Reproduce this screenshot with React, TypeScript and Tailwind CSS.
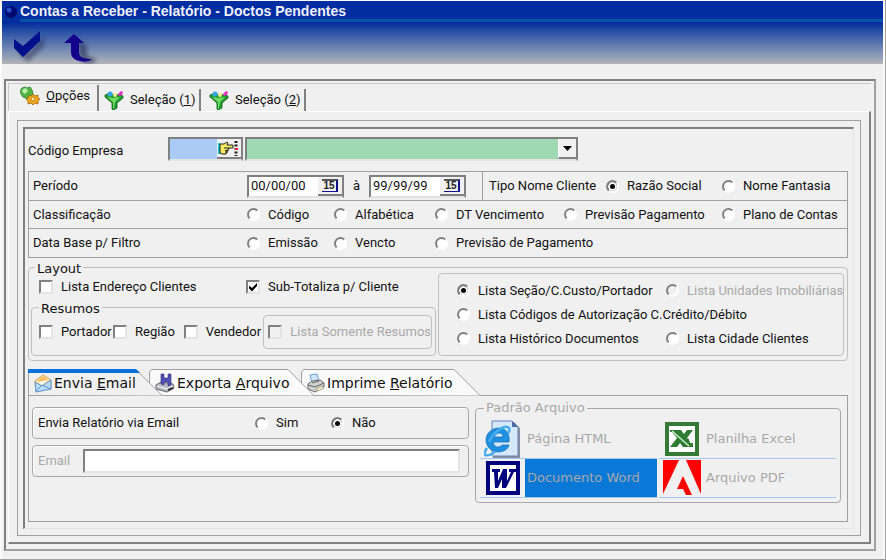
import React, { useState } from 'react';

const radioClass =
  'appearance-none m-0 w-[13px] h-[13px] shrink-0 rounded-full border-2 border-[#808080] border-r-white border-b-white bg-white checked:bg-black checked:shadow-[inset_0_0_0_2px_white] disabled:bg-[#f0f0f0]';

const groupClass = 'min-w-0 rounded border border-[#a8a8a8] shadow-[inset_1px_1px_0_white]';

interface OptionProps {
  name: string;
  label: string;
  defaultChecked?: boolean;
  disabled?: boolean;
  className?: string;
}

const Radio: React.FC<OptionProps> = ({ name, label, defaultChecked, disabled, className = '' }) => (
  <label className={`flex items-center gap-2 whitespace-nowrap ${disabled ? 'text-[#a8a8a8]' : ''} ${className}`}>
    <input type="radio" name={name} defaultChecked={defaultChecked} disabled={disabled} className={radioClass} />
    {label}
  </label>
);

const Check: React.FC<OptionProps> = ({ name, label, defaultChecked, disabled, className = '' }) => (
  <label className={`flex items-center gap-2 whitespace-nowrap ${disabled ? 'text-[#a8a8a8]' : ''} ${className}`}>
    <span className="grid shrink-0">
      <input
        type="checkbox"
        name={name}
        defaultChecked={defaultChecked}
        disabled={disabled}
        className="peer appearance-none m-0 w-[14px] h-[14px] col-start-1 row-start-1 border-2 border-[#808080] border-r-[#e3e3e3] border-b-[#e3e3e3] bg-white disabled:bg-[#f0f0f0]"
      />
      <svg viewBox="0 0 14 14" className="w-[14px] h-[14px] col-start-1 row-start-1 pointer-events-none invisible peer-checked:visible">
        <path d="M3 5.500v3l3 3 5-5.500V3L6 8z" fill="#000" />
      </svg>
    </span>
    {label}
  </label>
);

const DateField: React.FC<{ label: string; value: string }> = ({ label, value }) => (
  <div className="flex w-[97px] h-[23px] border-2 border-[#808080] border-b-[#e3e3e3] bg-white">
    <input aria-label={label} defaultValue={value} className="min-w-0 flex-1 pl-0.5 bg-white outline-none" />
    <button
      type="button"
      aria-label={`Calendário ${label}`}
      className="w-6 flex items-center justify-center bg-[#f0f0f0] border-b-2 border-[#808080]"
    >
      <span className="w-4 h-[13px] border-t-2 border-r-2 border-b border-t-[#555] border-r-[#10108c] border-b-[#10108c] text-[10px] leading-[10px] font-bold text-[#222] font-['Liberation_Sans',sans-serif]">
        15
      </span>
    </button>
  </div>
);

const GearsIcon = () => (
  <svg viewBox="0 0 20 20" className="w-5 h-5">
    <path d="M2 2l3-1 2 1 3-1 2 3 1 3-1 4-4 2-5-2-2-3-1-3z" fill="#4db441" stroke="#2c7d28" strokeWidth=".8" />
    <path d="M3 3l3-1 2 3-3 3-3-2z" fill="#b7efa9" />
    <path d="M9 9l2 1 2-2 2 2 3-1v3l2 1-2 2v3l-3-1-2 2-2-2-3 1v-3l-2-2 2-1z" fill="#f2a81d" stroke="#9c6512" strokeWidth=".8" />
    <circle cx="13" cy="13" r="2" fill="#fbe3a0" stroke="#b5720e" strokeWidth=".8" />
  </svg>
);

const FunnelIcon = () => (
  <svg viewBox="0 0 20 20" className="w-5 h-5">
    <path d="M1 5l3-1 12 1 3 1v2l-6 5v5l-4 2-1-1v-6L1 7z" fill="#1e9e2d" stroke="#0b5a17" strokeWidth=".8" />
    <path d="M3 7l6 1 7-1-5 5-1 6-1 1v-7z" fill="#74dc64" />
    <circle cx="6" cy="4" r="2.600" fill="#35a7e0" />
    <circle cx="11" cy="5" r="2" fill="#f3f08a" />
    <path d="M14 4l3-3 2 1-1 3-3 1z" fill="#e431c3" />
  </svg>
);

const HandIcon = () => (
  <svg viewBox="0 0 22 17" className="w-[22px] h-[17px]">
    <path d="M2 3v11" stroke="#10c4d0" strokeWidth="2" />
    <path
      d="M3 4h4l3-2 1 1-1 2h6v3h-4v1h-1v2h-1v2h-1v1H5l-2-1z"
      fill="#f5ea62"
      stroke="#222"
      strokeWidth="1"
    />
    <path d="M7 8h5M8 10.500h3M8 12h2" stroke="#222" />
    <path d="M19 1v15" stroke="#222" strokeWidth="3" strokeDasharray="2 1.500" />
    <path d="M18 8h3v2h-3z" fill="#f22" />
  </svg>
);

const MailIcon = () => (
  <svg viewBox="0 0 18 20" className="w-[18px] h-5">
    <path d="M1 8l8-6 8 5v9L2 18z" fill="#ffe3a1" stroke="#d3a457" />
    <path d="M1 9l7 4 9-6v9L2 19z" fill="#b8dcfa" stroke="#5d92cb" />
    <path d="M2 18l6-6 9 4" fill="none" stroke="#5d92cb" />
    <path d="M4 8l5-5 5 4-6 5z" fill="#f9bd63" />
    <path d="M4 9l10-2-6 5z" fill="#fff" />
  </svg>
);

const ExportIcon = () => (
  <svg viewBox="0 0 20 20" className="w-5 h-5">
    <path d="M1 12l5-3 12 2 1 4-7 4-11-3z" fill="#b9b9c1" stroke="#66666e" />
    <path d="M2 13l10 3 6-3" fill="none" stroke="#fff" />
    <path d="M13 17l5-2" stroke="#333" strokeWidth="2" />
    <path d="M6 1h3v4h4V1h3v11l-3 1V9H9v3l-3-1z" fill="#4f4fb4" stroke="#30307c" strokeWidth=".6" />
  </svg>
);

const PrinterIcon = () => (
  <svg viewBox="0 0 18 20" className="w-[18px] h-5">
    <path d="M3 2l7-1 2 8-7 1z" fill="#cfe6ff" stroke="#6fa0d6" />
    <path d="M1 11l4-3 8-1 4 3v4l-9 5-7-3z" fill="#d0d0d0" stroke="#666" />
    <path d="M1 12l7 2 9-4M5 10l7-2" fill="none" stroke="#666" />
    <path d="M9 16l6-3 2 2-6 3z" fill="#f8efb6" stroke="#777" strokeWidth=".6" />
  </svg>
);

const HtmlIcon = () => (
  <svg viewBox="0 0 38 38" className="w-[38px] h-[38px]">
    <path d="M9 2h21l6 6v30H9z" fill="#8a8f9a" />
    <path d="M8 1h20l6 6v29H8z" fill="#d5e8fb" stroke="#6484b8" />
    <path d="M28 1v6h6z" fill="#4b6ea8" />
    <path
      d="M15 8C8 8 2 13 2 20s6 12 12 12 10-3 11-7h-7c-1 1-2 2-4 2-3 0-4-2-5-5h16c1-8-3-14-10-14zm-5 9c1-2 3-4 5-4s4 1 4 4z"
      fill="#1f8fe0"
      stroke="#1268b4"
      strokeWidth=".7"
    />
    <path d="M3 28C-3 37 3 37 11 32M5 22C9 12 21 4 25 8c1 2 0 4-1 5" fill="none" stroke="#43adf0" strokeWidth="2.500" />
  </svg>
);

const ExcelIcon = () => (
  <svg viewBox="0 0 34 34" className="w-[34px] h-[34px]">
    <path d="M2 2h30v30H2z" fill="#fff" stroke="#347a36" strokeWidth="4" />
    <path d="M5 8h11l3 4 3-4h6l-6 8 3 2v3h3v4H18l-3-4-3 4H5l7-9-5-6H5z" fill="#2e7d32" />
    <path d="M7 9l17 15" stroke="#cdeeca" strokeWidth="1.500" />
    <path d="M24 17h5v4h-4z" fill="#fff" />
  </svg>
);

const WordIcon = () => (
  <svg viewBox="0 0 34 34" className="w-[34px] h-[34px]">
    <path d="M2 2h30v30H2z" fill="#fff" stroke="#00007e" strokeWidth="4" />
    <path d="M6 8h8v3h-2v9l5-12h4v12l4-9h-2V8h7v3h-2l-8 16h-4v-9l-4 9H9L8 11H6z" fill="#00007e" />
  </svg>
);

const PdfIcon = () => (
  <svg viewBox="0 0 38 36" className="w-[38px] h-9">
    <path d="M0 0h38v36H0z" fill="#f00" />
    <path d="M16 0h7l15 34v2H0v-2z" fill="#f0f0f0" />
    <path d="M20 16l9 19h-6l-3-6h-6z" fill="#f00" />
  </svg>
);

const mainTabs = [
  { text: '', key: 'O', rest: 'pções', icon: <GearsIcon />, size: 'w-[90px] h-[26px] pb-1 pl-[11px]' },
  { text: 'Seleção (', key: '1', rest: ')', icon: <FunnelIcon />, size: 'w-[102px] h-[22px] pl-[5px]' },
  { text: 'Seleção (', key: '2', rest: ')', icon: <FunnelIcon />, size: 'w-[105px] h-[22px] pl-2' },
];

const outputTabs = [
  { text: 'Envia ', key: 'E', rest: 'mail', icon: <MailIcon />, size: 'w-[121px] z-30', span: 121 },
  { text: 'Exporta ', key: 'A', rest: 'rquivo', icon: <ExportIcon />, size: 'w-[152px] z-20', span: 152 },
  { text: 'Imprime ', key: 'R', rest: 'elatório', icon: <PrinterIcon />, size: 'w-[166px] z-10', span: 166 },
];

const formats = [
  { label: 'Página HTML', icon: <HtmlIcon /> },
  { label: 'Planilha Excel', icon: <ExcelIcon /> },
  { label: 'Documento Word', icon: <WordIcon /> },
  { label: 'Arquivo PDF', icon: <PdfIcon /> },
];

const Header = () => (
  <header className="bg-[#002a9e]">
    <div className="flex items-center gap-0.5 h-[21px] pl-0.5 bg-[#002d9f]">
      <svg viewBox="0 0 14 14" className="w-3.5 h-3.5">
        <circle cx="7" cy="7" r="6" fill="#000b70" />
        <circle cx="5" cy="5" r="2.500" fill="#2c50c8" />
      </svg>
      <h1 className="flex-1 h-[21px] border-b-3 border-[#0054a8] text-[14px] leading-5 font-bold text-[#f0f0ff] font-['Liberation_Sans',Arial,sans-serif]">
        Contas a Receber - Relatório - Doctos Pendentes
      </h1>
    </div>
    <div className="flex gap-4 h-[42px] pl-[11px] pt-2 bg-linear-to-b from-[#00299c] to-[#b4b4b8]">
      <button type="button" aria-label="Confirmar" className="h-[34px]">
        <svg viewBox="0 0 34 34" className="w-[34px] h-[34px]">
          <path d="M6 14l9 9L31 6v10L15 32 6 24z" fill="#222a50" opacity=".5" className="blur-[2px]" />
          <path d="M1 9l9 7L27 1v10L10 27 1 18z" fill="#00108c" />
        </svg>
      </button>
      <button type="button" aria-label="Voltar" className="h-[34px]">
        <svg viewBox="0 0 36 34" className="w-9 h-[34px]">
          <path d="M16 10l8 6v10l10 4-6 4c-8 0-12-3-12-10z" fill="#222a50" opacity=".6" className="blur-[2px]" />
          <path d="M11 4l10 9h-5v9c0 5 4 7 13 7-4 3-8 3-12 2-6-1-9-4-9-9v-9H1z" fill="#14008c" />
        </svg>
      </button>
    </div>
  </header>
);

const FilterTable = () => (
  <div className="mt-2.5 border border-[#a0a0a0] divide-y divide-[#a0a0a0]">
    <div className="flex h-[29px] items-center">
      <span className="w-[218px] pl-1">Período</span>
      <DateField label="Período inicial" value="00/00/00" />
      <span className="w-[25px] text-center">à</span>
      <DateField label="Período final" value="99/99/99" />
      <div className="flex flex-1 self-stretch items-center ml-4 pl-1.5 border-l border-[#a0a0a0]">
        <span className="w-[117px]">Tipo Nome Cliente</span>
        <Radio name="tipoNome" label="Razão Social" defaultChecked className="w-[116px]" />
        <Radio name="tipoNome" label="Nome Fantasia" />
      </div>
    </div>
    <div className="grid grid-cols-[218px_87px_101px_129px_158px_1fr] h-7 items-center">
      <span className="pl-1">Classificação</span>
      <Radio name="classificacao" label="Código" />
      <Radio name="classificacao" label="Alfabética" />
      <Radio name="classificacao" label="DT Vencimento" />
      <Radio name="classificacao" label="Previsão Pagamento" />
      <Radio name="classificacao" label="Plano de Contas" />
    </div>
    <div className="grid grid-cols-[218px_87px_101px_1fr] h-7 items-center">
      <span className="pl-1">Data Base p/ Filtro</span>
      <Radio name="dataBase" label="Emissão" />
      <Radio name="dataBase" label="Vencto" />
      <Radio name="dataBase" label="Previsão de Pagamento" />
    </div>
  </div>
);

const LayoutGroup = () => (
  <fieldset className="min-w-0 -mt-px rounded border border-[#c0c0c0] pl-0.5 pr-[3px] pb-1">
    <legend className="ml-1 px-0.5 pt-1 leading-4 font-['DejaVu_Sans',sans-serif]">Layout</legend>
    <div className="flex gap-0.5 -mt-1.5">
      <div className="w-[405px]">
        <div className="flex items-center h-7 pt-1 pl-2">
          <Check name="endereco" label="Lista Endereço Clientes" className="w-[207px]" />
          <Check name="subTotaliza" label="Sub-Totaliza p/ Cliente" defaultChecked />
        </div>
        <fieldset className="min-w-0 -mt-0.5 rounded border border-[#c0c0c0] px-[3px] pb-1.5">
          <legend className="ml-1 px-0.5 pt-1 leading-4 font-['DejaVu_Sans',sans-serif]">Resumos</legend>
          <div className="flex items-center -mt-0.5">
            <Check name="portador" label="Portador" className="w-[74px] pl-1" />
            <Check name="regiao" label="Região" className="w-[71px] pl-1" />
            <Check name="vendedor" label="Vendedor" className="w-[84px] pl-1" />
            <div className="flex flex-1 items-center h-[34px] pl-1 rounded border border-[#c0c0c0]">
              <Check name="somente" label="Lista Somente Resumos" disabled />
            </div>
          </div>
        </fieldset>
      </div>
      <div className="grid flex-1 grid-cols-[209px_1fr] auto-rows-[24px] content-center mt-0.5 pl-[18px] items-center rounded border border-[#c0c0c0]">
        <Radio name="lista" label="Lista Seção/C.Custo/Portador" defaultChecked />
        <Radio name="lista" label="Lista Unidades Imobiliárias" disabled />
        <Radio name="lista" label="Lista Códigos de Autorização C.Crédito/Débito" className="col-span-2" />
        <Radio name="lista" label="Lista Histórico Documentos" />
        <Radio name="lista" label="Lista Cidade Clientes" />
      </div>
    </div>
  </fieldset>
);

const OutputTabs = () => {
  const [active, setActive] = useState(0);

  return (
    <div className="mt-2">
      <div role="tablist" className="flex h-[26px] text-[14px] font-['DejaVu_Sans',sans-serif]">
        {outputTabs.map((tab, i) => (
          <button
            key={tab.key}
            type="button"
            role="tab"
            aria-selected={active === i}
            onClick={() => setActive(i)}
            className={`grid ${tab.size}`}
          >
            <svg viewBox={`0 0 ${tab.span} 26`} className="col-start-1 row-start-1 w-full h-[26px] overflow-visible">
              <path
                d={`M.5 26V3l2-2.500H${tab.span - 13}l26 26`}
                fill={active === i ? '#f0f0f0' : '#fafafa'}
                stroke="#a0a0a0"
              />
              {active === i && <path d={`M0 0h${tab.span - 13}l4 4H0z`} fill="#0a6fd8" />}
            </svg>
            <span className="col-start-1 row-start-1 flex items-center gap-0.5 pl-1.5 pt-0.5 whitespace-nowrap">
              {tab.icon}
              <span>
                {tab.text}
                <u>{tab.key}</u>
                {tab.rest}
              </span>
            </span>
          </button>
        ))}
      </div>
      <div className="flex gap-1.5 pl-[3px] pr-1.5 pb-[18px] border border-[#a0a0a0]">
        <div className="w-[437px] pt-[11px] flex flex-col gap-1.5">
          <div className={`flex items-center h-8 pl-[5px] ${groupClass}`}>
            <span className="w-[217px]">Envia Relatório via Email</span>
            <Radio name="envia" label="Sim" className="w-[76px]" />
            <Radio name="envia" label="Não" defaultChecked />
          </div>
          <div className={`flex items-center h-8 pl-[5px] pr-2 ${groupClass}`}>
            <label htmlFor="email" className="w-[45px] text-[#a8a8a8]">
              Email
            </label>
            <input
              id="email"
              type="text"
              className="min-w-0 flex-1 h-6 px-1 bg-white border-2 border-[#808080] border-r-[#e3e3e3] border-b-[#e3e3e3] outline-none"
            />
          </div>
        </div>
        <fieldset className="min-w-0 flex-1 mt-1 px-1 pb-1 rounded border border-[#a8a8a8] font-['DejaVu_Sans',sans-serif] text-[#a8a8a8]">
          <legend className="ml-1 px-0.5 leading-4">Padrão Arquivo</legend>
          <div className="grid grid-cols-[177px_1fr] gap-x-0.5 pt-1">
            {formats.map((format) => {
              const selected = format.label === 'Documento Word';
              return (
                <button
                  key={format.label}
                  type="button"
                  aria-pressed={selected}
                  className="flex items-center h-[39px] border-b border-[#a6c8f0] text-left"
                >
                  <span className="flex w-[45px] h-[38px] items-center justify-center">{format.icon}</span>
                  <span className={`flex flex-1 items-center h-[38px] pl-0.5 ${selected ? 'bg-[#0a78d7]' : ''}`}>
                    {format.label}
                  </span>
                </button>
              );
            })}
          </div>
        </fieldset>
      </div>
    </div>
  );
};

export default function App() {
  const [active, setActive] = useState(0);

  return (
    <div className="min-h-screen pl-0.5 pr-0.5 pt-px bg-[#fafafa] border-b-2 border-r border-[#a0a0a0] text-[13px] leading-4 text-[#111] font-[Roboto,'Liberation_Sans',sans-serif]">
      <Header />
      <main className="pl-0.5 pt-[15px] pb-2 pr-[7px] bg-[#f0f0f0]">
        <div className="border-2 border-[#808080] border-r-[#a0a0a0] border-b-[#a0a0a0] pt-0.5 pl-0.5 pr-[3px] pb-[5px]">
          <div role="tablist" className="flex items-end h-7 border-t border-l border-[#c8c8c8]">
            {mainTabs.map((tab, i) => (
              <button
                key={tab.key}
                type="button"
                role="tab"
                aria-selected={active === i}
                onClick={() => setActive(i)}
                className={`flex items-center gap-1.5 border-r-2 border-[#808080] ${tab.size}`}
              >
                {tab.icon}
                <span>
                  {tab.text}
                  <u>{tab.key}</u>
                  {tab.rest}
                </span>
              </button>
            ))}
          </div>
          <div className="p-2 pb-1.5 border-t border-l border-white border-r-2 border-r-[#808080] border-b-2 border-b-[#808080]">
            <div className="border border-[#a0a0a0] pl-[5px] pt-[6px] pr-1.5 pb-1.5">
              <div className="border-l-2 border-t-2 border-[#808080] border-r border-b border-r-[#e3e3e3] border-b-[#e3e3e3] pl-[3px] pr-[5px] pt-2 pb-1.5">
                <div className="flex items-center">
                  <label htmlFor="codigo" className="w-[140px] pt-1">
                    Código Empresa
                  </label>
                  <div className="flex w-[75px] h-6 border-2 border-[#808080] border-b-[#e3e3e3]">
                    <input id="codigo" className="min-w-0 flex-1 bg-[#aacbf5] outline-none" />
                    <button type="button" aria-label="Procurar empresa" className="w-6 bg-[#f0f0f0] border-b-2 border-[#808080]">
                      <HandIcon />
                    </button>
                  </div>
                  <div className="grid w-[333px] ml-0.5">
                    <select
                      aria-label="Empresa"
                      className="appearance-none col-start-1 row-start-1 h-6 bg-[#9fd9b4] border-2 border-[#808080] border-b-[#e3e3e3]"
                    />
                    <span className="col-start-1 row-start-1 justify-self-end flex items-center justify-center w-[18px] h-5 mt-0.5 mr-0.5 bg-[#f0f0f0] border-l border-white border-b-2 border-b-[#808080] pointer-events-none">
                      <svg viewBox="0 0 9 5" className="w-[9px] h-[5px]">
                        <path d="M0 0h9L4.500 5z" fill="#000" />
                      </svg>
                    </span>
                  </div>
                </div>
                <FilterTable />
                <LayoutGroup />
                <OutputTabs />
              </div>
            </div>
          </div>
        </div>
      </main>
    </div>
  );
}
